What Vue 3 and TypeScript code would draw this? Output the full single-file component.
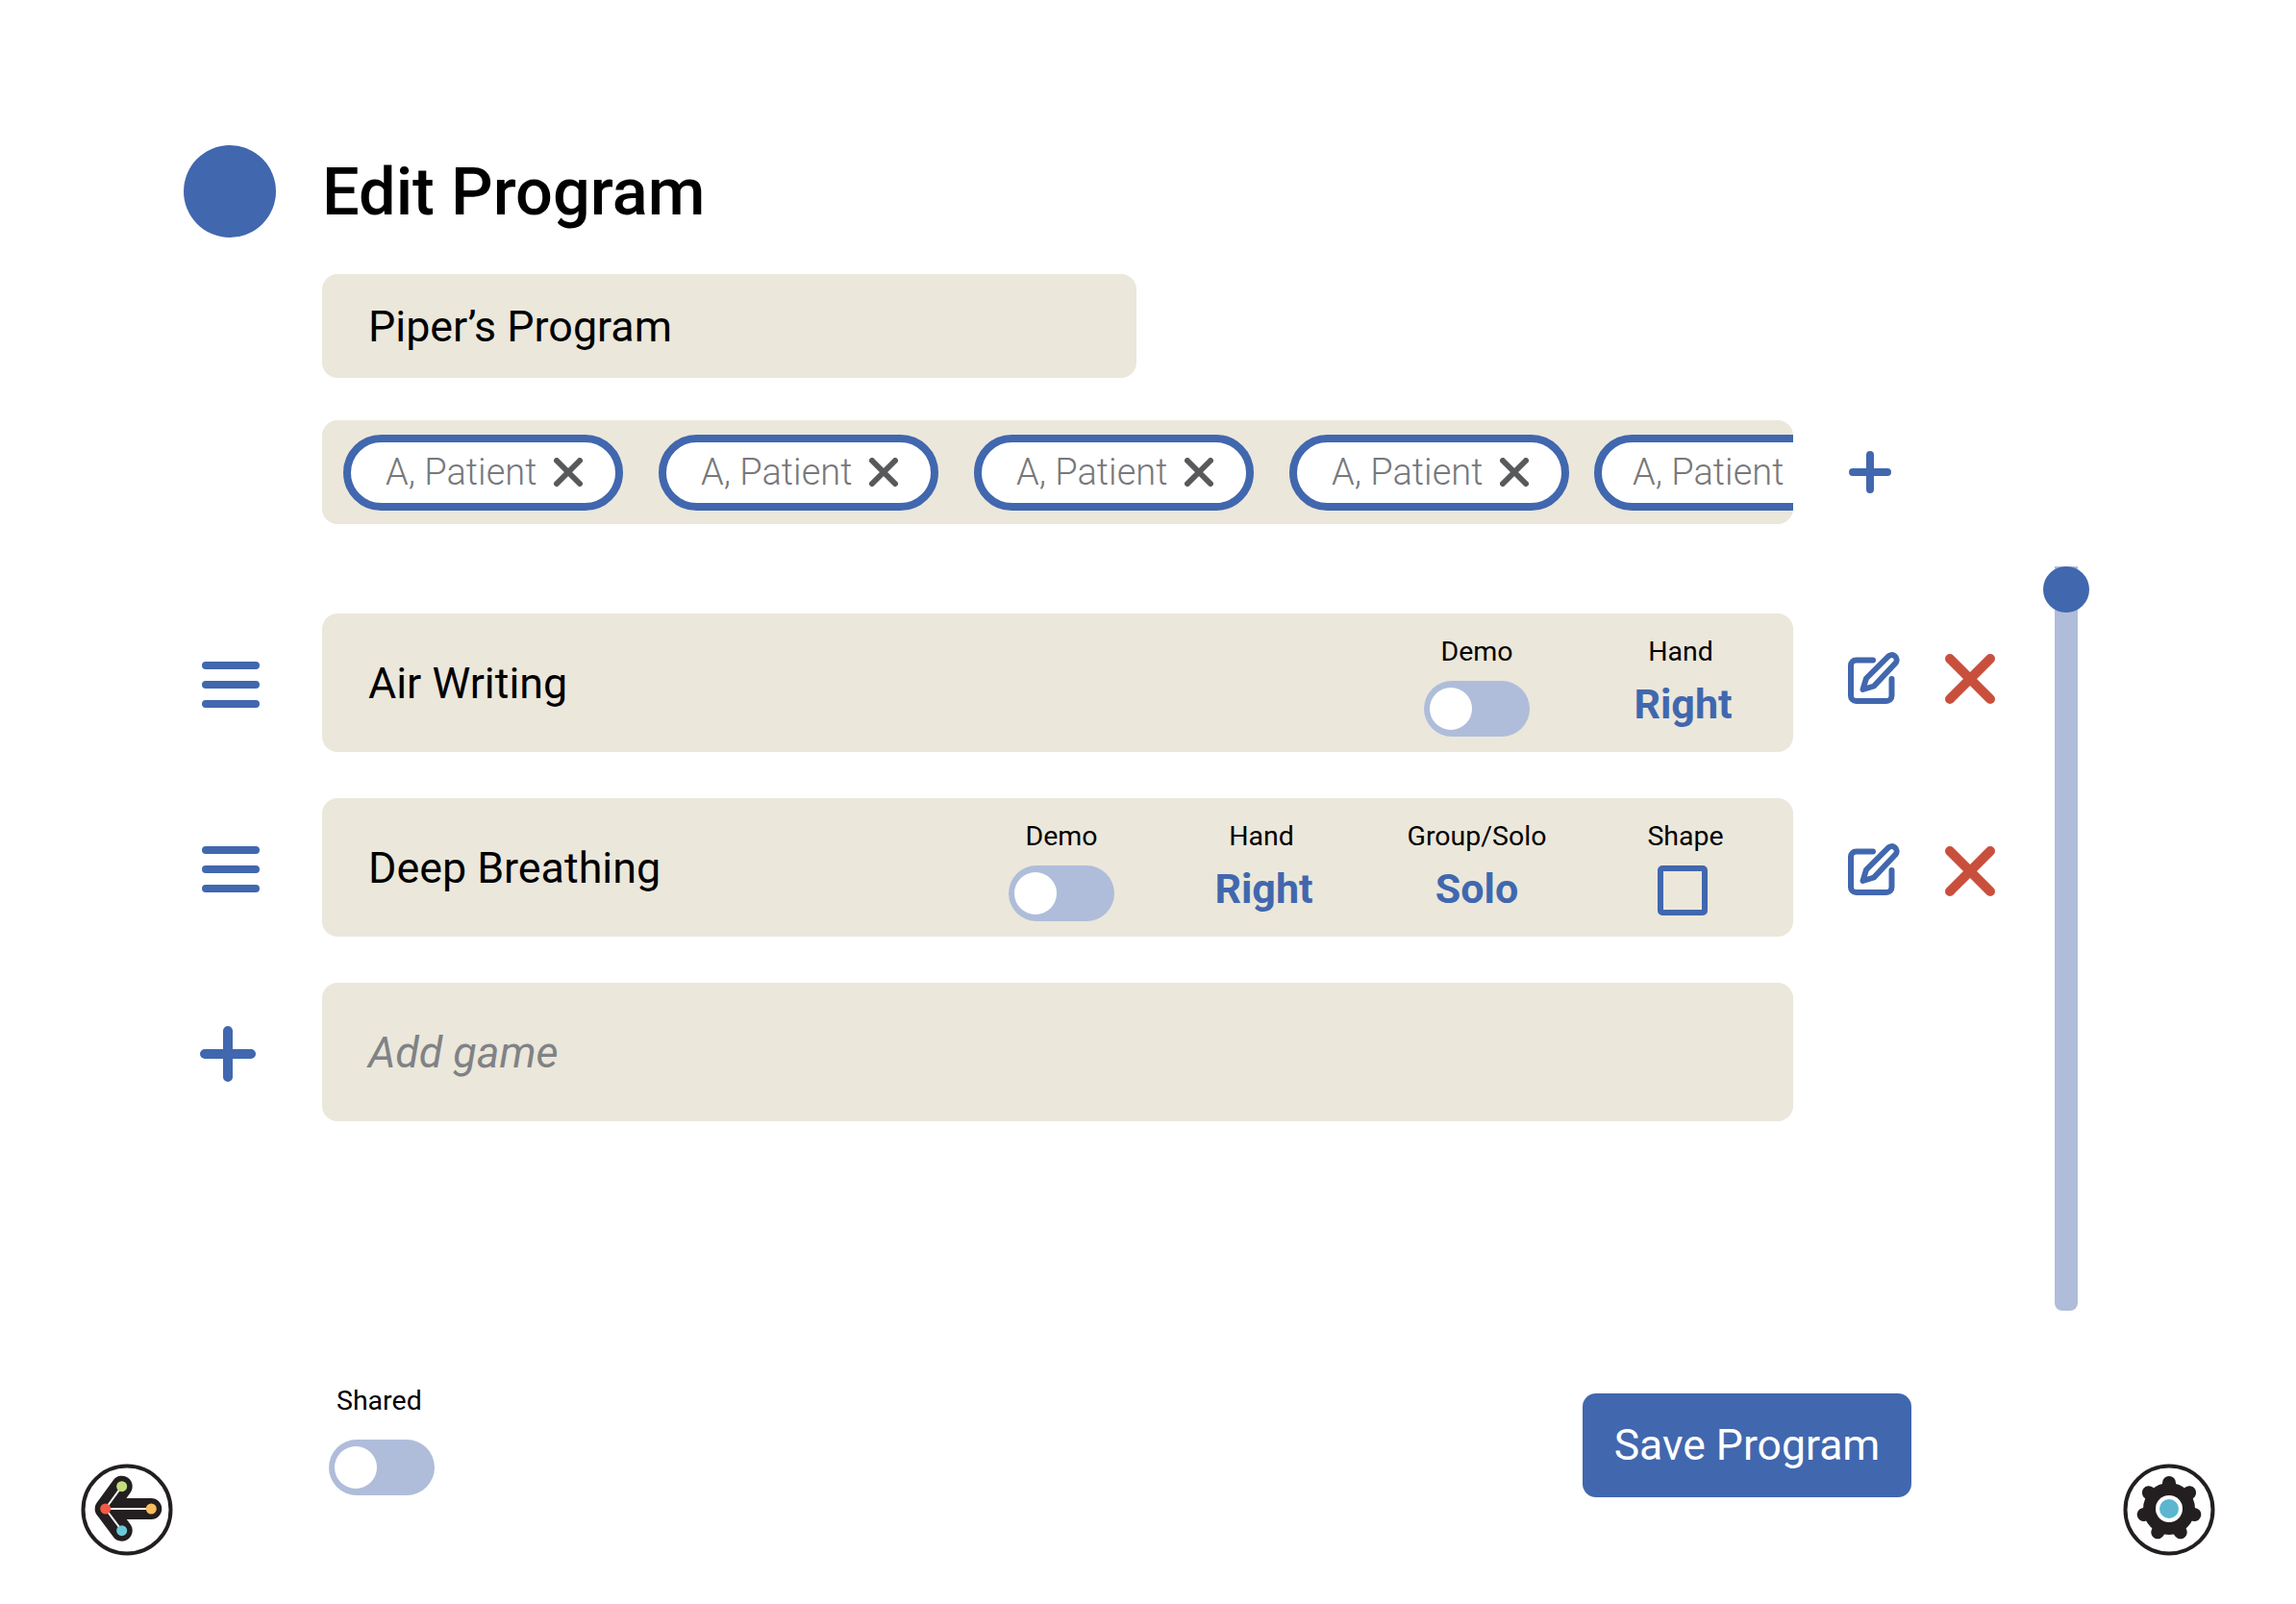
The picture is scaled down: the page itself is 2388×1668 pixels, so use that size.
<template>
  <div class="page">
    <header class="header">
      <span class="avatar"></span>
      <h1>Edit Program</h1>
    </header>

    <div class="content">
      <div class="form">
        <div class="row">
          <div class="gutter"></div>
          <div class="program-name">Piper’s Program</div>
        </div>

        <div class="row patients-row">
          <div class="gutter"></div>
          <div class="patients">
            <div v-for="(patient, index) in patients" :key="index" class="pill">
              <span>{{ patient }}</span>
              <svg class="pill-x" viewBox="0 0 30 30">
                <path d="M3 3L27 27M27 3L3 27" />
              </svg>
            </div>
          </div>
          <svg class="icon-plus small" viewBox="0 0 44 44">
            <path d="M22 4V40M4 22H40" />
          </svg>
        </div>

        <div v-for="game in games" :key="game.name" class="row game-row">
          <div class="gutter">
            <svg class="icon-menu" viewBox="0 0 60 48">
              <path d="M4 4H56M4 24H56M4 44H56" />
            </svg>
          </div>
          <div class="game" :class="game.cls">
            <span class="game-name">{{ game.name }}</span>
            <div class="options">
              <div class="option demo">
                <label>Demo</label>
                <span class="toggle"><i></i></span>
              </div>
              <div class="option hand">
                <label>Hand</label>
                <b>Right</b>
              </div>
              <div v-if="game.extended" class="option group">
                <label>Group/Solo</label>
                <b>Solo</b>
              </div>
              <div v-if="game.extended" class="option shape">
                <label>Shape</label>
                <span class="checkbox"></span>
              </div>
            </div>
          </div>
          <div class="actions" :class="game.cls">
            <svg class="icon-edit" viewBox="0 0 54 54">
              <path d="M26 8.5H8.5a5.5 5.5 0 0 0-5.500 5.500V45.500a5.500 5.500 0 0 0 5.500 5.500H40a5.500 5.500 0 0 0 5.500-5.500V28" />
              <path d="M15.500 39L19 27.500L41.500 5a5 5 0 0 1 8 6.500L27 35.500Z" />
            </svg>
            <svg class="icon-x" viewBox="0 0 52 52">
              <path d="M5 5L47 47M47 5L5 47" />
            </svg>
          </div>
        </div>

        <div class="row game-row">
          <div class="gutter">
            <svg class="icon-plus big" viewBox="0 0 58 58">
              <path d="M29 5V53M5 29H53" />
            </svg>
          </div>
          <div class="game add-game"><span>Add game</span></div>
        </div>
      </div>

      <div class="scrollbar"><span></span></div>
    </div>

    <footer class="footer">
      <div class="shared">
        <label>Shared</label>
        <span class="toggle"><i></i></span>
      </div>
      <button class="save">Save Program</button>
    </footer>

    <svg class="corner back" viewBox="0 0 96 96">
      <circle cx="48" cy="48" r="45.500" fill="none" stroke="#231f20" stroke-width="4" />
      <path d="M25.700 47L42.700 23.700M25.700 47L42.700 69.700M25.700 47H73.300" fill="none" stroke="#231f20" stroke-width="22" stroke-linecap="round" stroke-linejoin="round" />
      <path d="M25.700 47L42.700 23.700M25.700 47L42.700 69.700M25.700 47H73.300" fill="none" stroke="#fff" stroke-width="2" />
      <circle cx="25.700" cy="47" r="5.500" fill="#f15a47" />
      <circle cx="42.700" cy="23.700" r="5.500" fill="#c5dd7c" />
      <circle cx="73.300" cy="47" r="5.500" fill="#f7bd5e" />
      <circle cx="42.700" cy="69.700" r="5.500" fill="#6dc8d6" />
    </svg>

    <svg class="corner settings" viewBox="0 0 96 96">
      <circle cx="48" cy="48" r="45.500" fill="none" stroke="#231f20" stroke-width="4" />
      <g transform="translate(48 47)">
        <circle r="27" fill="#231f20" />
        <path
          v-for="angle in gearTeeth"
          :key="angle"
          d="M0 -20V-27"
          :transform="`rotate(${angle})`"
          stroke="#231f20"
          stroke-width="14"
          stroke-linecap="round"
        />
        <circle r="14" fill="#fff" />
        <circle r="10" fill="#5cb6d0" />
      </g>
    </svg>
  </div>
</template>

<script setup lang="ts">
interface Game {
  name: string;
  cls: string;
  extended: boolean;
}

const patients: string[] = Array(5).fill("A, Patient");

const games: Game[] = [
  { name: "Air Writing", cls: "first", extended: false },
  { name: "Deep Breathing", cls: "second", extended: true },
];

// seven teeth on the settings gear
const gearTeeth = Array.from({ length: 7 }, (_, i) => (i * 360) / 7);
</script>

<style>
html,
body {
  margin: 0;
  background: #fff;
}
</style>

<style scoped>
.page {
  position: relative;
  width: 2388px;
  height: 1668px;
  overflow: hidden;
  font-family: Roboto, "Liberation Sans", sans-serif;
  color: #000;
  box-sizing: border-box;
  padding-top: 151px;
}

.header {
  display: flex;
  align-items: center;
  padding-left: 191px;
  height: 97px;
  gap: 48px;
}

.avatar {
  width: 96px;
  height: 96px;
  margin-top: -1px;
  border-radius: 50%;
  background: #4167ae;
}

h1 {
  margin: 1px 0 0;
  font-size: 68.5px;
  font-weight: 500;
  line-height: 1;
}

.content {
  display: flex;
  margin-top: 37px;
}

.form {
  width: 2125px;
  flex: none;
}

.row {
  display: flex;
  align-items: center;
}

.gutter {
  width: 335px;
  flex: none;
  display: flex;
}

.program-name {
  width: 847px;
  height: 108px;
  box-sizing: border-box;
  display: flex;
  align-items: center;
  padding-left: 48px;
  background: #ebe7db;
  border-radius: 16px;
  font-size: 44.8px;
}

.patients-row {
  margin-top: 44px;
}

.patients {
  width: 1530px;
  height: 108px;
  box-sizing: border-box;
  display: flex;
  align-items: center;
  gap: 37px;
  padding-left: 22px;
  background: #ebe7db;
  border-radius: 16px;
  overflow: hidden;
}

.pill {
  flex: none;
  width: 291px;
  height: 79px;
  box-sizing: border-box;
  display: flex;
  align-items: center;
  gap: 18px;
  padding-left: 36px;
  background: #fff;
  border: 8px solid #4167ae;
  border-radius: 40px;
  font-size: 38px;
  font-weight: 300;
  color: #77787b;
}

.pill:last-child {
  margin-left: -11px;
  padding-left: 32px;
}

.pill-x {
  width: 30px;
  height: 30px;
  fill: none;
  stroke: #58595b;
  stroke-width: 6;
  stroke-linecap: round;
}

.icon-plus {
  fill: none;
  stroke: #4167ae;
  stroke-linecap: round;
}

.icon-plus.small {
  width: 44px;
  height: 44px;
  margin-left: 58px;
  stroke-width: 8;
}

.icon-plus.big {
  width: 58px;
  height: 58px;
  margin: 3px 0 0 208px;
  stroke-width: 10;
}

.icon-menu {
  width: 60px;
  height: 48px;
  margin: 3px 0 0 210px;
  fill: none;
  stroke: #4167ae;
  stroke-width: 8;
  stroke-linecap: round;
}

.game-row {
  margin-top: 48px;
}

.patients-row + .game-row {
  margin-top: 93px;
}

.game {
  width: 1530px;
  height: 144px;
  flex: none;
  box-sizing: border-box;
  display: flex;
  align-items: center;
  justify-content: space-between;
  padding-left: 48px;
  background: #ebe7db;
  border-radius: 16px;
}

.game-name,
.add-game span {
  font-size: 44.8px;
  padding-top: 1px;
}

.add-game {
  font-style: italic;
  color: #808285;
}

.options {
  display: flex;
  height: 100%;
}

.game.first .options {
  padding-right: 11px;
}

.game.second .options {
  padding-right: 15px;
}

.option {
  display: flex;
  flex-direction: column;
  align-items: center;
  padding-top: 23px;
}

.first .option {
  width: 212px;
}

.second .option.demo,
.second .option.hand {
  width: 208px;
}

.second .option.group {
  width: 240px;
}

.second .option.shape {
  width: 194px;
}

label {
  font-size: 28.5px;
  line-height: 34px;
}

.option b {
  margin-top: 12px;
  margin-left: 5px;
  font-size: 43px;
  line-height: 50px;
  font-weight: 700;
  color: #4167ae;
}

.option.group b {
  margin-left: 0;
}

.toggle {
  position: relative;
  display: block;
  width: 110px;
  height: 58px;
  border-radius: 29px;
  background: #afbdda;
}

.option .toggle {
  margin-top: 13px;
}

.toggle i {
  position: absolute;
  left: 6px;
  top: 7px;
  width: 44px;
  height: 44px;
  border-radius: 50%;
  background: #fff;
}

.checkbox {
  display: block;
  width: 52px;
  height: 52px;
  box-sizing: border-box;
  margin-top: 13px;
  margin-right: 7px;
  border: 6px solid #4167ae;
  border-radius: 5px;
}

.actions {
  display: flex;
  align-items: center;
  gap: 47px;
  margin-left: 57px;
}

.actions.first {
  margin-bottom: 11px;
}

.actions.second {
  margin-top: 4px;
}

.icon-edit {
  width: 54px;
  height: 54px;
  fill: none;
  stroke: #4167ae;
  stroke-width: 6;
  stroke-linejoin: round;
  stroke-linecap: round;
}

.icon-x {
  width: 52px;
  height: 52px;
  margin-top: 3px;
  fill: none;
  stroke: #c94f3d;
  stroke-width: 10;
  stroke-linecap: round;
}

.scrollbar {
  position: relative;
  width: 48px;
  height: 774px;
  margin-top: 304px;
  flex: none;
  display: flex;
  justify-content: center;
}

.scrollbar::before {
  content: "";
  width: 24px;
  height: 100%;
  background: #afbdda;
  border-radius: 0 0 8px 8px;
}

.scrollbar span {
  position: absolute;
  top: 0;
  left: 0;
  width: 48px;
  height: 48px;
  border-radius: 50%;
  background: #4167ae;
}

.footer {
  position: absolute;
  left: 342px;
  top: 1440px;
  width: 1646px;
  display: flex;
  justify-content: space-between;
}

.shared {
  display: flex;
  flex-direction: column;
  align-items: flex-start;
}

.shared label {
  margin-left: 8px;
  margin-bottom: 23px;
}

.save {
  width: 342px;
  height: 108px;
  margin-top: 9px;
  border: none;
  border-radius: 14px;
  background: #4167ae;
  color: #fff;
  font-family: Roboto, "Liberation Sans", sans-serif;
  font-size: 44.5px;
}

.corner {
  position: absolute;
  top: 1522px;
  width: 96px;
  height: 96px;
}

.corner.back {
  left: 84px;
}

.corner.settings {
  left: 2208px;
}
</style>
